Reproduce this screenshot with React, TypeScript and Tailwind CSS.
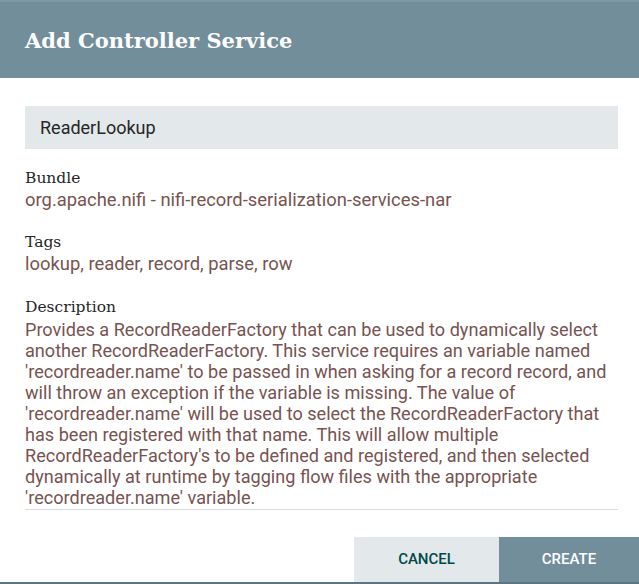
const descriptionLines = [
  'Provides a RecordReaderFactory that can be used to dynamically select',
  'another RecordReaderFactory. This service requires an variable named',
  "'recordreader.name' to be passed in when asking for a record record, and",
  'will throw an exception if the variable is missing. The value of',
  "'recordreader.name' will be used to select the RecordReaderFactory that",
  'has been registered with that name. This will allow multiple',
  "RecordReaderFactory's to be defined and registered, and then selected",
  'dynamically at runtime by tagging flow files with the appropriate',
  "'recordreader.name' variable.",
];

export default function App() {
  const slab = { fontFamily: '"DejaVu Serif", "Liberation Serif", serif' };
  return (
    <div className="w-[639px] h-[584px] bg-white flex flex-col overflow-hidden" style={{ fontFamily: 'Roboto, "Liberation Sans", sans-serif' }}>
      <div className="h-[78px] shrink-0 bg-[#728e9b] border-t-2 border-[#7f97a3] flex items-center px-[25px] pt-[2px]">
        <h1 className="text-[21px] font-bold text-white" style={slab}>
          Add Controller Service
        </h1>
      </div>
      <div className="flex-1 flex flex-col px-[25px] pt-[28px]">
        <div className="h-[43px] bg-[#e3e8eb] flex items-center px-[15px] mr-[-4px] text-[18px] text-[#262626]">
          ReaderLookup
        </div>
        <div className="mt-[18px]">
          <div className="text-[15.5px] leading-[22px] text-[#262626]" style={slab}>Bundle</div>
          <div className="text-[18.4px] leading-[22px] text-[#775351]">
            org.apache.nifi - nifi-record-serialization-services-nar
          </div>
        </div>
        <div className="mt-[20px]">
          <div className="text-[15.5px] leading-[22px] text-[#262626]" style={slab}>Tags</div>
          <div className="text-[18.4px] leading-[22px] text-[#775351]">lookup, reader, record, parse, row</div>
        </div>
        <div className="mt-[20px] mr-[-4px] border-b border-[#d6dde2] pb-[1px]">
          <div className="text-[15.5px] leading-[24px] text-[#262626]" style={slab}>Description</div>
          <div className="text-[18.1px] leading-[21px] text-[#775351]">
            {descriptionLines.map((line) => (
              <div key={line} className="whitespace-nowrap">
                {line}
              </div>
            ))}
          </div>
        </div>
      </div>
      <div className="flex justify-end shrink-0 border-b-2 border-[#5d7581]">
        <button className="w-[145px] h-[45px] bg-[#e3e8eb] text-[#004849] text-[15px] font-medium uppercase">
          Cancel
        </button>
        <button className="w-[140px] h-[45px] bg-[#728e9b] text-white text-[15px] font-medium uppercase">
          Create
        </button>
      </div>
    </div>
  );
}
